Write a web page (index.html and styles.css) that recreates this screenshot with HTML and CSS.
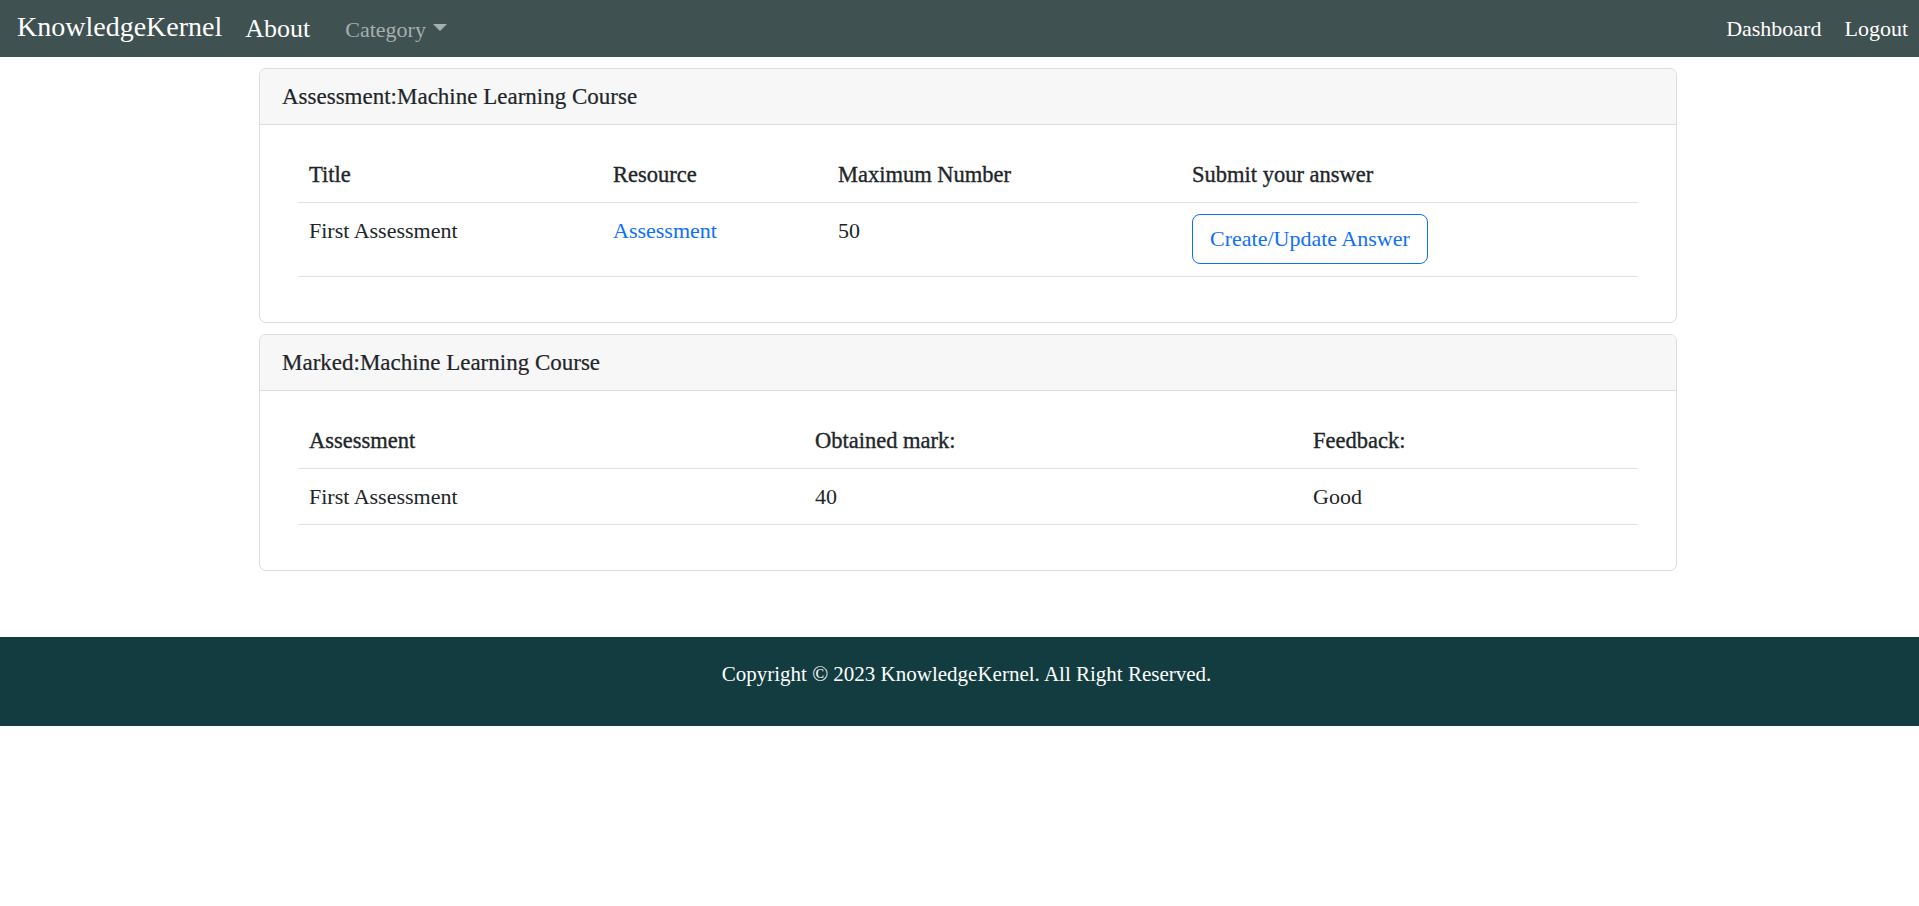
FILE: index.html
```html
<!DOCTYPE html>
<html lang="en">
<head>
<meta charset="utf-8">
<title>KnowledgeKernel</title>
<link rel="stylesheet" href="styles.css">
</head>
<body>
<nav class="navbar">
  <a class="brand" href="#">KnowledgeKernel</a>
  <a class="nav-about" href="#">About</a>
  <a class="nav-category" href="#">Category<span class="caret"></span></a>
  <div class="nav-right">
    <a class="nav-link dash" href="#">Dashboard</a>
    <a class="nav-link" href="#">Logout</a>
  </div>
</nav>

<main class="main">
  <section class="card">
    <div class="card-header">Assessment:Machine Learning Course</div>
    <div class="card-body">
      <table class="table t1">
        <colgroup>
          <col class="c1a"><col class="c1b"><col class="c1c"><col class="c1d">
        </colgroup>
        <thead>
          <tr><th>Title</th><th>Resource</th><th>Maximum Number</th><th>Submit your answer</th></tr>
        </thead>
        <tbody>
          <tr>
            <td>First Assessment</td>
            <td><a class="link" href="#">Assessment</a></td>
            <td>50</td>
            <td><a class="btn-outline" href="#">Create/Update Answer</a></td>
          </tr>
        </tbody>
      </table>
    </div>
  </section>

  <section class="card">
    <div class="card-header">Marked:Machine Learning Course</div>
    <div class="card-body">
      <table class="table t2">
        <colgroup>
          <col class="c2a"><col class="c2b"><col class="c2c">
        </colgroup>
        <thead>
          <tr><th>Assessment</th><th>Obtained mark:</th><th>Feedback:</th></tr>
        </thead>
        <tbody>
          <tr><td>First Assessment</td><td>40</td><td>Good</td></tr>
        </tbody>
      </table>
    </div>
  </section>
</main>

<footer class="footer">
  <p class="copy">Copyright © 2023 KnowledgeKernel. All Right Reserved.</p>
</footer>
</body>
</html>
```

FILE: styles.css
```css
* { box-sizing: border-box; }

html, body {
  margin: 0;
  padding: 0;
  background: #ffffff;
}

body {
  font-family: "Liberation Serif", "Times New Roman", serif;
  color: #212529;
}

a { text-decoration: none; }

/* Navbar */
.navbar {
  height: 57px;
  background: #405151;
  display: flex;
  align-items: center;
  padding: 0 11px 0 17px;
}

.brand {
  color: #ffffff;
  font-size: 28px;
  line-height: 40px;
  padding-bottom: 3px;
  margin-right: 23px;
}

.nav-about {
  color: #ffffff;
  font-size: 26px;
  line-height: 40px;
  margin-right: 35px;
}

.nav-category {
  color: #a6afaf;
  font-size: 22px;
  line-height: 40px;
  display: flex;
  align-items: center;
  padding-top: 2px;
}

.caret {
  display: inline-block;
  width: 0;
  height: 0;
  margin-left: 7px;
  margin-top: -4px;
  border-top: 7px solid #a6afaf;
  border-left: 7px solid transparent;
  border-right: 7px solid transparent;
}

.nav-right {
  margin-left: auto;
  display: flex;
  align-items: center;
}

.nav-link {
  color: #ffffff;
  font-size: 22px;
  line-height: 40px;
}

.nav-link.dash { margin-right: 23px; }

/* Main content */
.main {
  width: 1418px;
  margin-left: 259px;
  padding-top: 11px;
  padding-bottom: 66px;
  display: flex;
  flex-direction: column;
  gap: 11px;
}

.card {
  border: 1px solid #dcdcdc;
  border-radius: 7px;
  overflow: hidden;
  background: #ffffff;
}

.card-header {
  height: 56px;
  display: flex;
  align-items: center;
  padding: 0 22px;
  background: #f7f7f7;
  border-bottom: 1px solid #dcdcdc;
  font-size: 23px;
  color: #212529;
  -webkit-text-stroke: 0.2px #212529;
}

.card-body {
  padding: 22px 38px 45px;
}

.table {
  width: 100%;
  border-collapse: collapse;
  table-layout: fixed;
}

.c1a { width: 304px; }
.c1b { width: 225px; }
.c1c { width: 354px; }
.c1d { width: 457px; }

.c2a { width: 506px; }
.c2b { width: 498px; }
.c2c { width: 336px; }

.table th,
.table td {
  text-align: left;
  vertical-align: top;
  padding: 12px 11px;
  line-height: 31px;
  border-bottom: 1px solid #dee2e6;
}

.table th {
  font-size: 22.5px;
  font-weight: normal;
  -webkit-text-stroke: 0.35px #212529;
}

.table td {
  font-size: 22px;
}

.link {
  color: #0d6efd;
}

.btn-outline {
  display: inline-block;
  color: #0d6efd;
  border: 1px solid #0d6efd;
  border-radius: 8px;
  padding: 9px 17px 9px 17px;
  line-height: 30px;
  font-size: 22px;
  margin-top: -1px;
}

/* Footer */
.footer {
  background: #123c3f;
  height: 89px;
  padding: 22px 0 0 14px;
}

.copy {
  margin: 0;
  text-align: center;
  color: #ffffff;
  font-size: 21px;
  line-height: 30px;
}
```
